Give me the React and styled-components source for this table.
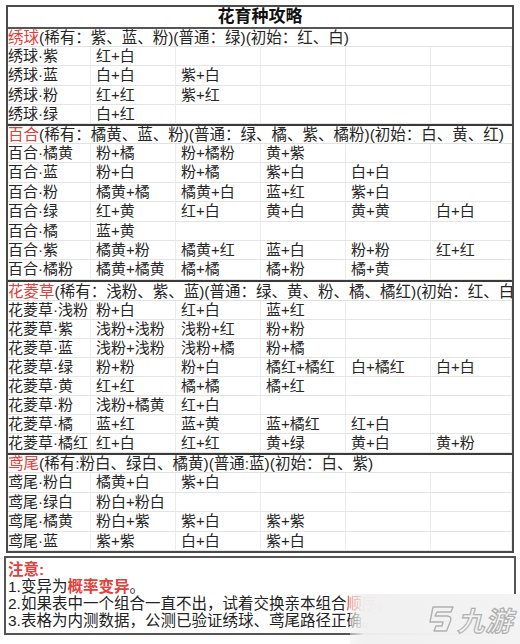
import React from "react";
import styled, { createGlobalStyle } from "styled-components";

const Global = createGlobalStyle`
  html, body {
    margin: 0;
    padding: 0;
    background: #fff;
  }
  body {
    font-family: "Liberation Sans", "Noto Sans CJK SC", sans-serif;
    color: #222;
  }
`;

const Page = styled.div`
  position: relative;
  width: 520px;
  height: 644px;
  overflow: hidden;
  padding: 5px 0 0 6px;
  box-sizing: border-box;
`;

const Sheet = styled.div`
  width: 508px;
  border: 2px solid #4a4a4a;
  box-sizing: border-box;
`;

const Title = styled.div`
  height: 20px;
  line-height: 20px;
  text-align: center;
  font-size: 17px;
  font-weight: 700;
  color: #111;
  border-bottom: 2px solid #555;
`;

const Section = styled.div`
  border-bottom: ${(p) => (p.last ? "none" : "2px solid #3a3a3a")};
  margin-bottom: ${(p) => (p.gap ? "1px" : "0")};
`;

const Header = styled.div`
  height: 17px;
  line-height: 17px;
  font-size: 15.5px;
  white-space: nowrap;
  overflow: hidden;
  border-bottom: 1px solid #e2e2e2;
  color: #262626;
`;

const Red = styled.span`
  color: #e2403b;
  font-weight: ${(p) => (p.bold ? 700 : 400)};
`;

const Row = styled.div`
  display: grid;
  grid-template-columns: 83px 85px 85px 85px 85px 1fr;
  height: ${(p) => p.h}px;
`;

const Cell = styled.div`
  box-sizing: border-box;
  font-size: 15px;
  line-height: ${(p) => p.h - 1}px;
  white-space: nowrap;
  padding-left: ${(p) => (p.name ? "0" : "5px")};
  border-right: 1px solid #ececec;
  border-bottom: 1px solid #e4e4e4;
  color: #262626;
`;

const Notes = styled.div`
  margin: 3px 0 0 -2px;
  width: 512px;
  height: 79px;
  border: 2px solid #555;
  box-sizing: border-box;
  padding: 3px 0 0 2px;
  font-size: 15.5px;
  line-height: 17px;
  color: #222;
  white-space: nowrap;
  overflow: hidden;
`;

const Line = styled.div`
  height: 17px;
`;

const Watermark = styled.div`
  position: absolute;
  right: 0;
  bottom: 0;
  width: 170px;
  height: 50px;
  background: linear-gradient(
    to right,
    rgba(240, 236, 236, 0.5) 0,
    rgba(240, 240, 240, 0.97) 14px,
    #f3f3f3 100%
  );
  display: flex;
  align-items: center;
  justify-content: flex-end;
  gap: 4px;
  padding-right: 4px;
  box-sizing: border-box;
`;

const Brand = styled.span`
  font-family: "Noto Sans CJK SC", sans-serif;
  font-size: 27px;
  font-weight: 700;
  color: transparent;
  -webkit-text-stroke: 1.2px #b0b0b0;
  transform: skewX(-14deg);
  letter-spacing: 1px;
`;

const sections = [
  {
    name: "绣球",
    info: "(稀有：紫、蓝、粉)(普通：绿)(初始：红、白)",
    h: 19.25,
    rows: [
      ["绣球·紫", "红+白"],
      ["绣球·蓝", "白+白", "紫+白"],
      ["绣球·粉", "红+红", "紫+红"],
      ["绣球·绿", "白+红"],
    ],
  },
  {
    name: "百合",
    info: "(稀有：橘黄、蓝、粉)(普通：绿、橘、紫、橘粉)(初始：白、黄、红)",
    h: 19.4,
    rows: [
      ["百合·橘黄", "粉+橘", "粉+橘粉", "黄+紫"],
      ["百合·蓝", "粉+白", "粉+橘", "紫+白", "白+白"],
      ["百合·粉", "橘黄+橘", "橘黄+白", "蓝+红", "紫+白"],
      ["百合·绿", "红+黄", "红+白", "黄+白", "黄+黄", "白+白"],
      ["百合·橘", "蓝+黄"],
      ["百合·紫", "橘黄+粉", "橘黄+红", "蓝+白", "粉+粉", "红+红"],
      ["百合·橘粉", "橘黄+橘黄", "橘+橘", "橘+粉", "橘+黄"],
    ],
  },
  {
    name: "花菱草",
    info: "(稀有：浅粉、紫、蓝)(普通：绿、黄、粉、橘、橘红)(初始：红、白)",
    h: 19.1,
    rows: [
      ["花菱草·浅粉", "粉+白", "红+白", "蓝+红"],
      ["花菱草·紫", "浅粉+浅粉", "浅粉+红", "粉+粉"],
      ["花菱草·蓝", "浅粉+浅粉", "浅粉+橘", "粉+橘"],
      ["花菱草·绿", "粉+粉", "粉+白", "橘红+橘红", "白+橘红", "白+白"],
      ["花菱草·黄", "红+红", "橘+橘", "橘+红"],
      ["花菱草·粉", "浅粉+橘黄", "红+白"],
      ["花菱草·橘", "蓝+红", "蓝+黄", "蓝+橘红", "红+白"],
      ["花菱草·橘红", "红+白", "红+红", "黄+绿", "黄+白", "黄+粉"],
    ],
  },
  {
    name: "鸢尾",
    info: "(稀有:粉白、绿白、橘黄)(普通:蓝)(初始：白、紫)",
    h: 19.5,
    rows: [
      ["鸢尾·粉白", "橘黄+白", "紫+白"],
      ["鸢尾·绿白", "粉白+粉白"],
      ["鸢尾·橘黄", "粉白+紫", "紫+白", "紫+紫"],
      ["鸢尾·蓝", "紫+紫", "白+白", "紫+白"],
    ],
  },
];

function Logo() {
  return (
    <svg width="34" height="30" viewBox="0 0 34 30" fill="none">
      <path
        d="M11 3 H31 L29 8 H15 L13 12 H25 Q30 12 28.5 17 L24.5 27 H12 L14 22 H20 L21 18 H8 Z"
        stroke="#b0b0b0"
        strokeWidth="1.4"
        strokeLinejoin="round"
      />
    </svg>
  );
}

export default function App() {
  return (
    <Page>
      <Global />
      <Sheet>
        <Title>花育种攻略</Title>
        {sections.map((s, si) => (
          <Section key={s.name} last={si === sections.length - 1} gap={si === 1}>
            <Header>
              <Red>{s.name}</Red>
              {s.info}
            </Header>
            {s.rows.map((r) => (
              <Row key={r[0]} h={s.h}>
                {[0, 1, 2, 3, 4, 5].map((i) => (
                  <Cell key={i} name={i === 0} h={s.h}>
                    {r[i] || ""}
                  </Cell>
                ))}
              </Row>
            ))}
          </Section>
        ))}
      </Sheet>
      <Notes>
        <Line>
          <Red bold>注意:</Red>
        </Line>
        <Line>
          1.变异为<Red bold>概率变异</Red>。
        </Line>
        <Line>
          2.如果表中一个组合一直不出，试着交换亲本组合<Red>顺序</Red>。
        </Line>
        <Line>3.表格为内测数据，公测已验证绣球、鸢尾路径正确。</Line>
      </Notes>
      <Watermark>
        <Logo />
        <Brand>九游</Brand>
      </Watermark>
    </Page>
  );
}
